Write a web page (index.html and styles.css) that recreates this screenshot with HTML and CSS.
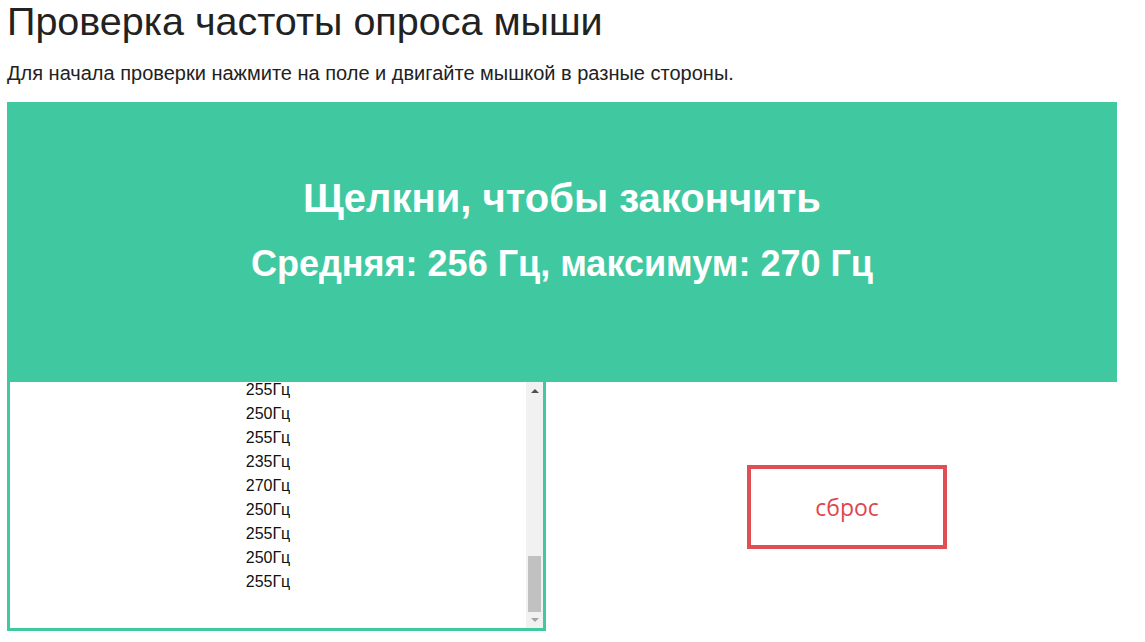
FILE: index.html
```html
<!DOCTYPE html>
<html lang="ru">
<head>
<meta charset="utf-8">
<title>Проверка частоты опроса мыши</title>
<link rel="stylesheet" href="styles.css">
</head>
<body>
<div class="page">
  <h1 class="title">Проверка частоты опроса мыши</h1>
  <p class="lead">Для начала проверки нажмите на поле и двигайте мышкой в разные стороны.</p>
  <div class="field">
    <div class="field-title">Щелкни, чтобы закончить</div>
    <div class="field-stats">Средняя: 256 Гц, максимум: 270 Гц</div>
  </div>
  <div class="bottom">
    <div class="log">
      <div class="log-view">
        <div class="log-items">
          <div class="item">255Гц</div>
          <div class="item">250Гц</div>
          <div class="item">255Гц</div>
          <div class="item">235Гц</div>
          <div class="item">270Гц</div>
          <div class="item">250Гц</div>
          <div class="item">255Гц</div>
          <div class="item">250Гц</div>
          <div class="item">255Гц</div>
        </div>
      </div>
      <div class="scrollbar">
        <div class="sb-btn"><span class="arrow-up"></span></div>
        <div class="sb-track"><div class="sb-thumb"></div></div>
        <div class="sb-btn"><span class="arrow-down"></span></div>
      </div>
    </div>
    <div class="actions">
      <div class="reset">сброс</div>
    </div>
  </div>
</div>
</body>
</html>
```

FILE: styles.css
```css
html, body {
  margin: 0;
  padding: 0;
  background: #ffffff;
}
body {
  font-family: "Liberation Sans", Arial, sans-serif;
  color: #222222;
}
.page {
  padding-left: 7px;
}
.title {
  margin: 0;
  font-size: 39.5px;
  font-weight: normal;
  line-height: 42px;
  color: #222222;
}
.lead {
  margin: 19px 0 0 0;
  font-size: 20px;
  line-height: 24px;
  color: #222222;
}
.field {
  margin-top: 17px;
  width: 1110px;
  height: 280px;
  background: #40c9a0;
  color: #ffffff;
  font-weight: bold;
  display: flex;
  flex-direction: column;
  align-items: center;
  justify-content: flex-start;
  box-sizing: border-box;
  padding-top: 73px;
}
.field-title {
  font-size: 40px;
  line-height: 46px;
}
.field-stats {
  margin-top: 22px;
  font-size: 36px;
  line-height: 42px;
}
.bottom {
  display: flex;
  height: 249px;
}
.log {
  width: 539px;
  height: 249px;
  box-sizing: border-box;
  border: 3px solid #40c9a0;
  border-top: none;
  display: flex;
  background: #ffffff;
}
.log-view {
  flex: 1;
  overflow: hidden;
}
.log-items {
  margin-top: -4px;
}
.item {
  font-size: 16px;
  line-height: 24px;
  text-align: center;
  color: #111111;
}
.scrollbar {
  width: 17px;
  background: #f1f1f1;
  display: flex;
  flex-direction: column;
}
.sb-btn {
  height: 17px;
  display: flex;
  align-items: center;
  justify-content: center;
}
.sb-btn:last-child {
  height: 16px;
}
.arrow-up {
  width: 0;
  height: 0;
  border-left: 4px solid transparent;
  border-right: 4px solid transparent;
  border-bottom: 4px solid #505050;
}
.arrow-down {
  width: 0;
  height: 0;
  border-left: 4px solid transparent;
  border-right: 4px solid transparent;
  border-top: 4px solid #a3a3a3;
}
.sb-track {
  flex: 1;
  display: flex;
  flex-direction: column;
  justify-content: flex-end;
}
.sb-thumb {
  height: 56px;
  margin: 0 2px;
  background: #c1c1c1;
}
.actions {
  flex: 1;
  display: flex;
  align-items: center;
  justify-content: center;
  padding-left: 3px;
}
.reset {
  width: 200px;
  height: 84px;
  box-sizing: border-box;
  border: 4px solid #e04f54;
  display: flex;
  align-items: center;
  justify-content: center;
  font-family: "Open Sans", "Noto Sans", sans-serif;
  font-size: 23px;
  color: #e0474c;
}
```
